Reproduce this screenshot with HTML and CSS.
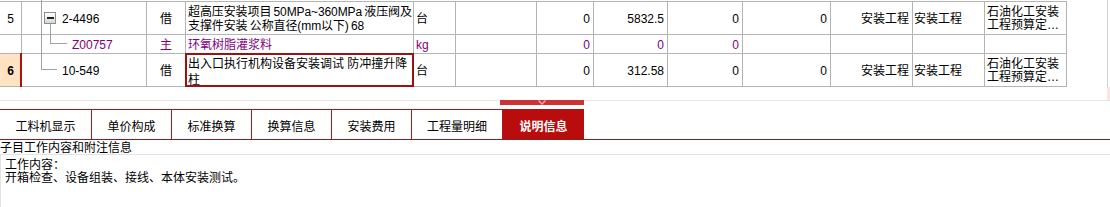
FILE: index.html
```html
<!DOCTYPE html>
<html lang="zh-CN">
<head>
<meta charset="utf-8">
<title>说明信息</title>
<link rel="stylesheet" href="styles.css">
</head>
<body>
<div class="top">
  <div class="grid">
    <!-- row 1 -->
    <div class="c ctr">5</div>
    <div class="c tree">
      <span class="vl v-full"></span>
      <span class="fold"><span class="minus"></span></span>
      <span class="vl v-child"></span>
      <span class="code">2-4496</span>
    </div>
    <div class="c ctr">借</div>
    <div class="c desc"><div>超高压安装项目 50MPa~360MPa 液压阀及<br>支撑件安装 公称直径(mm以下) 68</div></div>
    <div class="c">台</div>
    <div class="c"></div>
    <div class="c num">0</div>
    <div class="c num">5832.5</div>
    <div class="c num">0</div>
    <div class="c num">0</div>
    <div class="c num">安装工程</div>
    <div class="c left1">安装工程</div>
    <div class="c two"><div>石油化工安装<br>工程预算定…</div></div>
    <!-- row 2 -->
    <div class="c"></div>
    <div class="c tree purple">
      <span class="vl v-full"></span>
      <span class="vl v-child2"></span>
      <span class="hl h-child2"></span>
      <span class="code code2">Z00757</span>
    </div>
    <div class="c ctr purple">主</div>
    <div class="c purple">环氧树脂灌浆料</div>
    <div class="c purple">kg</div>
    <div class="c"></div>
    <div class="c num purple">0</div>
    <div class="c num purple">0</div>
    <div class="c num purple">0</div>
    <div class="c"></div>
    <div class="c"></div>
    <div class="c"></div>
    <div class="c"></div>
    <!-- row 3 -->
    <div class="c ctr rh-active">6</div>
    <div class="c tree">
      <span class="vl v-last"></span>
      <span class="hl h-last"></span>
      <span class="code">10-549</span>
    </div>
    <div class="c ctr">借</div>
    <div class="c"><div class="editor">出入口执行机构设备安装调试 防冲撞升降<br>柱</div></div>
    <div class="c">台</div>
    <div class="c"></div>
    <div class="c num">0</div>
    <div class="c num">312.58</div>
    <div class="c num">0</div>
    <div class="c num">0</div>
    <div class="c num">安装工程</div>
    <div class="c left1">安装工程</div>
    <div class="c two"><div>石油化工安装<br>工程预算定…</div></div>
  </div>
  <div class="fill"></div>
  <div class="vscroll"><div class="vs-track"></div><div class="vs-end"></div></div>
</div>

<div class="handle-row">
  <div class="handle">
    <svg width="8" height="5" viewBox="0 0 8 5"><polyline points="0.5,0.5 4,4 7.5,0.5" fill="none" stroke="#f6a9b0" stroke-width="1.4"/></svg>
  </div>
</div>

<div class="tabs">
  <div class="tab w92">工料机显示</div>
  <div class="tab w80">单价构成</div>
  <div class="tab w80">标准换算</div>
  <div class="tab w80">换算信息</div>
  <div class="tab w80">安装费用</div>
  <div class="tab w91">工程量明细</div>
  <div class="tab active">说明信息</div>
</div>

<div class="caption">子目工作内容和附注信息</div>
<div class="content">工作内容：<br>开箱检查、设备组装、接线、本体安装测试。</div>
</body>
</html>
```

FILE: styles.css
```css
* { box-sizing: border-box; }

body {
  margin: 0;
  width: 1110px;
  height: 207px;
  overflow: hidden;
  background: #fff;
  color: #000;
  font-family: "Liberation Sans", "Noto Sans CJK SC", sans-serif;
  font-size: 12px;
}

.top {
  display: flex;
  align-items: flex-start;
  height: 100px;
}

.grid {
  display: grid;
  grid-template-columns: 21px 124px 38px 227px 41px 80px 56px 73px 74px 87px 81px 71px 81px;
  grid-template-rows: 32px 18px 32px;
  gap: 1px;
  background: #b4b4b4;
  padding: 1px 1px 1px 0;
  margin-top: 1px;
}

.c {
  position: relative;
  background: #fff;
  display: flex;
  align-items: center;
  padding: 1px 2px 0;
  white-space: nowrap;
  line-height: 14px;
}

.ctr { justify-content: center; }
.num { justify-content: flex-end; padding-right: 3px; }
.left1 { padding-left: 1px; }
.purple { color: #800080; }

.desc div { line-height: 14px; word-spacing: -1px; letter-spacing: -0.1px; }
.two div { line-height: 13px; }

.rh-active {
  background: #ffe3c2;
  font-weight: bold;
}
.rh-active::after {
  content: "";
  position: absolute;
  right: -1px;
  top: -1px;
  bottom: -1px;
  width: 2px;
  background: #a31616;
}

/* tree connectors */
.tree { padding-left: 40px; }
.tree .code2 { margin-left: 10px; }
.vl, .hl { position: absolute; background: #a2a2a2; }
.vl { width: 1px; }
.hl { height: 1px; }
.v-full { left: 19px; top: -2px; bottom: -1px; }
.v-child { left: 28px; top: 22px; bottom: -1px; }
.v-child2 { left: 28px; top: -1px; height: 9px; }
.h-child2 { left: 28px; top: 8px; width: 17px; }
.v-last { left: 19px; top: -1px; height: 16px; }
.h-last { left: 19px; top: 15px; width: 16px; }

.fold {
  position: absolute;
  left: 22px;
  top: 10px;
  width: 12px;
  height: 12px;
  border: 1px solid #8e8e8e;
  background: linear-gradient(#ffffff, #d6d6d6);
  display: flex;
  align-items: center;
  justify-content: center;
}
.minus {
  width: 7px;
  height: 2px;
  background: #222;
}

.editor {
  position: absolute;
  left: -1px;
  top: -1px;
  right: -1px;
  bottom: -1px;
  border: 2px solid #9b1212;
  background: #fff;
  padding: 1px 0 0 1px;
  line-height: 16px;
  white-space: nowrap;
  z-index: 1;
}

.fill { flex: 1; }

.vscroll {
  width: 3px;
  display: flex;
  flex-direction: column;
}
.vs-track { height: 87px; border-left: 1px solid #d2d2d2; }
.vs-end { height: 13px; background: #fde4e4; }

/* tabs */
.handle-row {
  height: 9px;
  border-top: 1px solid #e6e6e6;
  padding-left: 500px;
}
.handle {
  width: 84px;
  height: 5px;
  margin-top: -1px;
  background: #cd3333;
  display: flex;
  justify-content: center;
}
.handle svg { display: block; }

.tabs {
  display: flex;
  height: 31px;
  border-bottom: 1px solid #8f1c1c;
}
.tab {
  display: flex;
  align-items: center;
  justify-content: center;
  border-top: 1px solid #b01818;
  border-right: 1px solid #b01818;
  padding-top: 4px;
  line-height: 14px;
  white-space: nowrap;
}
.w92 { width: 92px; }
.w80 { width: 80px; }
.w91 { width: 91px; }
.tab.active {
  width: 81px;
  background: #b90c0c;
  border-top-color: #b90c0c;
  border-right: none;
  color: #fff;
  font-weight: bold;
}

.caption {
  height: 15px;
  line-height: 14px;
  padding-top: 1px;
  border-bottom: 1px solid #e3e3e3;
  white-space: nowrap;
}

.content {
  height: 52px;
  border-left: 1px solid #e3e3e3;
  padding: 4px 0 0 4px;
  line-height: 13px;
}
```
